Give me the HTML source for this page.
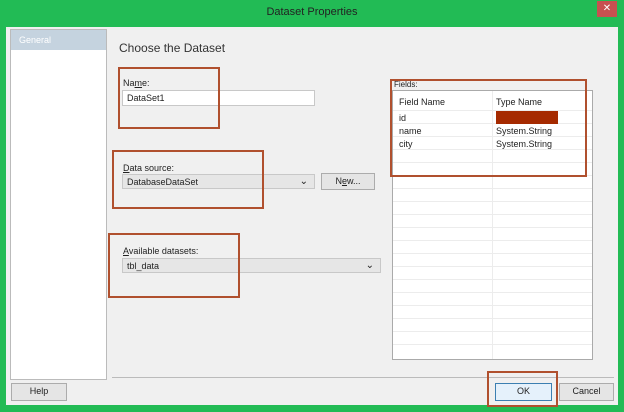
<!DOCTYPE html><html><head><style>
*{margin:0;padding:0;box-sizing:border-box}
body{width:624px;height:412px;background:#22bb55;font-family:"Liberation Sans",sans-serif;font-size:9px;color:#222;position:relative;overflow:hidden}
.a{position:absolute}
.red{position:absolute;border:2px solid #b0502e}
.in{position:absolute;background:#fff;border:1px solid #c8c8c8;padding:2px 4px;font-size:9px}
.dd{position:absolute;background:#e6e6e6;border:1px solid #c8c8c8;padding:2px 4px;font-size:9px}
.dd:after{content:"\2304";position:absolute;right:6px;top:1px;font-size:10px}
.btn{position:absolute;background:#e5e5e5;border:1px solid #acacac;text-align:center;font-size:9px;line-height:15px}
.row{position:absolute;left:0;width:199px;height:13px;border-top:1px solid #ececec}
</style></head><body>
<div class="a" style="left:0;top:0;width:624px;height:27px;text-align:center;line-height:25px;font-size:11px;color:#222">Dataset Properties</div>
<div class="a" style="left:597px;top:1px;width:20px;height:16px;background:#c75050;color:#fff;text-align:center;font-size:10px;line-height:16px">✕</div>
<div class="a" style="left:6px;top:27px;width:612px;height:378px;background:#f0f0f0"></div>
<div class="a" style="left:10px;top:29px;width:97px;height:351px;background:#fff;border:1px solid #bbb"></div>
<div class="a" style="left:11px;top:30px;width:95px;height:20px;background:#c5d3df;color:#fff;padding:5px 8px;font-size:9px">General</div>
<div class="a" style="left:119px;top:41px;font-size:12px;color:#333">Choose the Dataset</div>
<div class="a" style="left:123px;top:78px">Na<u>m</u>e:</div>
<div class="in" style="left:122px;top:90px;width:193px;height:16px">DataSet1</div>
<div class="a" style="left:123px;top:163px"><u>D</u>ata source:</div>
<div class="dd" style="left:122px;top:174px;width:193px;height:15px">DatabaseDataSet</div>
<div class="btn" style="left:321px;top:173px;width:54px;height:17px">N<u>e</u>w...</div>
<div class="a" style="left:123px;top:246px"><u>A</u>vailable datasets:</div>
<div class="dd" style="left:122px;top:258px;width:259px;height:15px">tbl_data</div>
<div class="a" style="left:394px;top:80px;font-size:8px">Fields:</div>
<div class="a" style="left:392px;top:90px;width:201px;height:270px;background:#fff;border:1px solid #aaa">
<div class="a" style="left:99px;top:0;width:1px;height:268px;background:#ececec"></div>
<div class="a" style="left:6px;top:6px">Field Name</div><div class="a" style="left:103px;top:6px">Type Name</div>
<div class="row" style="top:19px"></div><div class="row" style="top:32px"></div><div class="row" style="top:45px"></div><div class="row" style="top:58px"></div><div class="row" style="top:71px"></div><div class="row" style="top:84px"></div><div class="row" style="top:97px"></div><div class="row" style="top:110px"></div><div class="row" style="top:123px"></div><div class="row" style="top:136px"></div><div class="row" style="top:149px"></div><div class="row" style="top:162px"></div><div class="row" style="top:175px"></div><div class="row" style="top:188px"></div><div class="row" style="top:201px"></div><div class="row" style="top:214px"></div><div class="row" style="top:227px"></div><div class="row" style="top:240px"></div><div class="row" style="top:253px"></div>
<div class="a" style="left:6px;top:22px">id</div><div class="a" style="left:103px;top:20px;width:62px;height:13px;background:#a52a00"></div>
<div class="a" style="left:6px;top:35px">name</div><div class="a" style="left:103px;top:35px">System.String</div>
<div class="a" style="left:6px;top:48px">city</div><div class="a" style="left:103px;top:48px">System.String</div>
</div>
<div class="a" style="left:112px;top:377px;width:502px;height:1px;background:#bbb"></div>
<div class="btn" style="left:11px;top:383px;width:56px;height:18px">Help</div>
<div class="btn" style="left:495px;top:383px;width:57px;height:18px;border-color:#3c7fb1;background:#e5f1fb">OK</div>
<div class="btn" style="left:559px;top:383px;width:55px;height:18px">Cancel</div>
<div class="red" style="left:118px;top:67px;width:102px;height:62px"></div>
<div class="red" style="left:112px;top:150px;width:152px;height:59px"></div>
<div class="red" style="left:108px;top:233px;width:132px;height:65px"></div>
<div class="red" style="left:390px;top:79px;width:197px;height:98px"></div>
<div class="red" style="left:487px;top:371px;width:71px;height:36px"></div>
</body></html>
